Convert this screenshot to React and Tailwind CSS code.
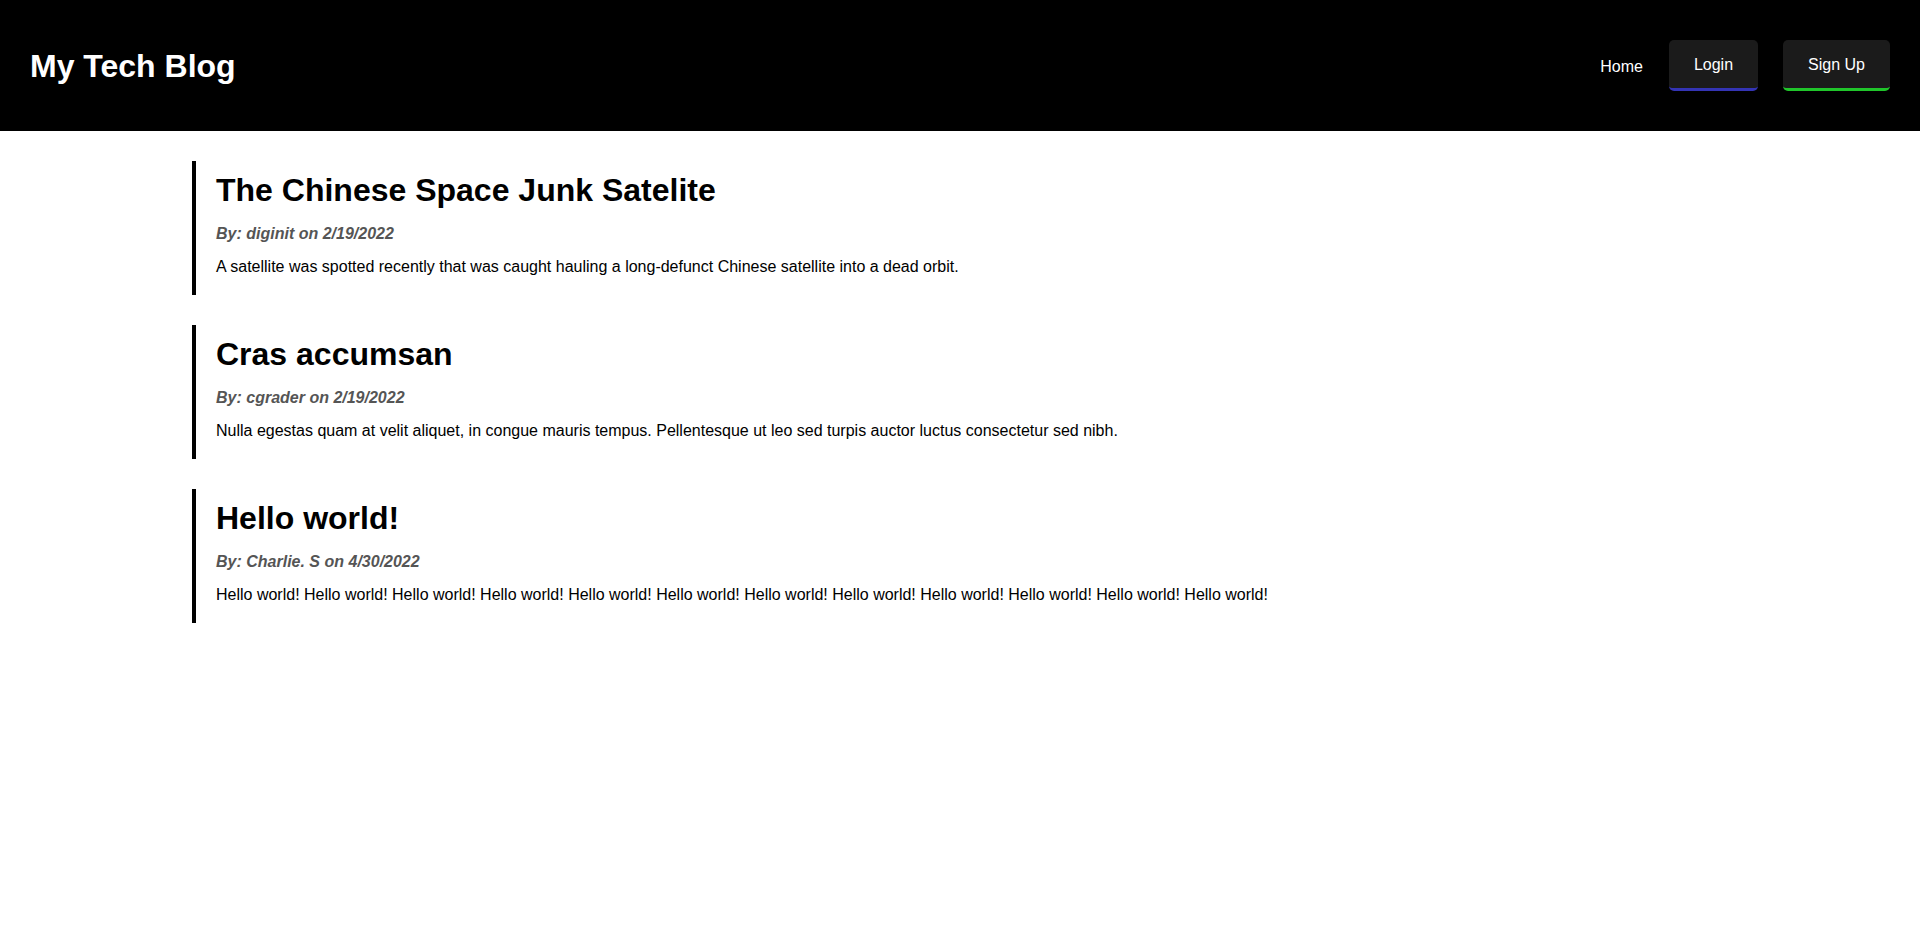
const posts = [
  {
    title: "The Chinese Space Junk Satelite",
    author: "diginit",
    date: "2/19/2022",
    body: "A satellite was spotted recently that was caught hauling a long-defunct Chinese satellite into a dead orbit.",
  },
  {
    title: "Cras accumsan",
    author: "cgrader",
    date: "2/19/2022",
    body: "Nulla egestas quam at velit aliquet, in congue mauris tempus. Pellentesque ut leo sed turpis auctor luctus consectetur sed nibh.",
  },
  {
    title: "Hello world!",
    author: "Charlie. S",
    date: "4/30/2022",
    body: "Hello world! Hello world! Hello world! Hello world! Hello world! Hello world! Hello world! Hello world! Hello world! Hello world! Hello world! Hello world!",
  },
];

function Header() {
  return (
    <header className="bg-black h-[131px] px-[30px] flex items-center justify-between">
      <h1 className="text-white text-[32px] font-bold leading-[36px]">My Tech Blog</h1>
      <nav className="flex items-center gap-[25px] text-white text-[16px] leading-[18px]">
        <a href="#" className="mr-px pt-[2px]">Home</a>
        <button className="bg-[#1b1b1b] rounded-[5px] px-[25px] pt-[16px] pb-[14px] border-b-[3px] border-[#3434b4]">
          Login
        </button>
        <button className="bg-[#1b1b1b] rounded-[5px] px-[25px] pt-[16px] pb-[14px] border-b-[3px] border-[#20c52b]">
          Sign Up
        </button>
      </nav>
    </header>
  );
}

function Post({ post }) {
  return (
    <article className="border-l-4 border-black pl-5 pt-[11px] pb-[18px]">
      <h2 className="text-[32px] font-bold leading-[36px] text-black">{post.title}</h2>
      <p className="mt-[18px] text-[16px] leading-[16px] font-bold italic text-[#555555]">
        By: {post.author} on {post.date}
      </p>
      <p className="mt-[15px] text-[16px] leading-[20px] text-black">{post.body}</p>
    </article>
  );
}

export default function App() {
  return (
    <div className="min-h-screen bg-white font-['Liberation_Sans',Arial,sans-serif]">
      <Header />
      <main className="w-[80%] mx-auto mt-[30px] flex flex-col gap-[30px]">
        {posts.map((post) => (
          <Post key={post.title} post={post} />
        ))}
      </main>
    </div>
  );
}
